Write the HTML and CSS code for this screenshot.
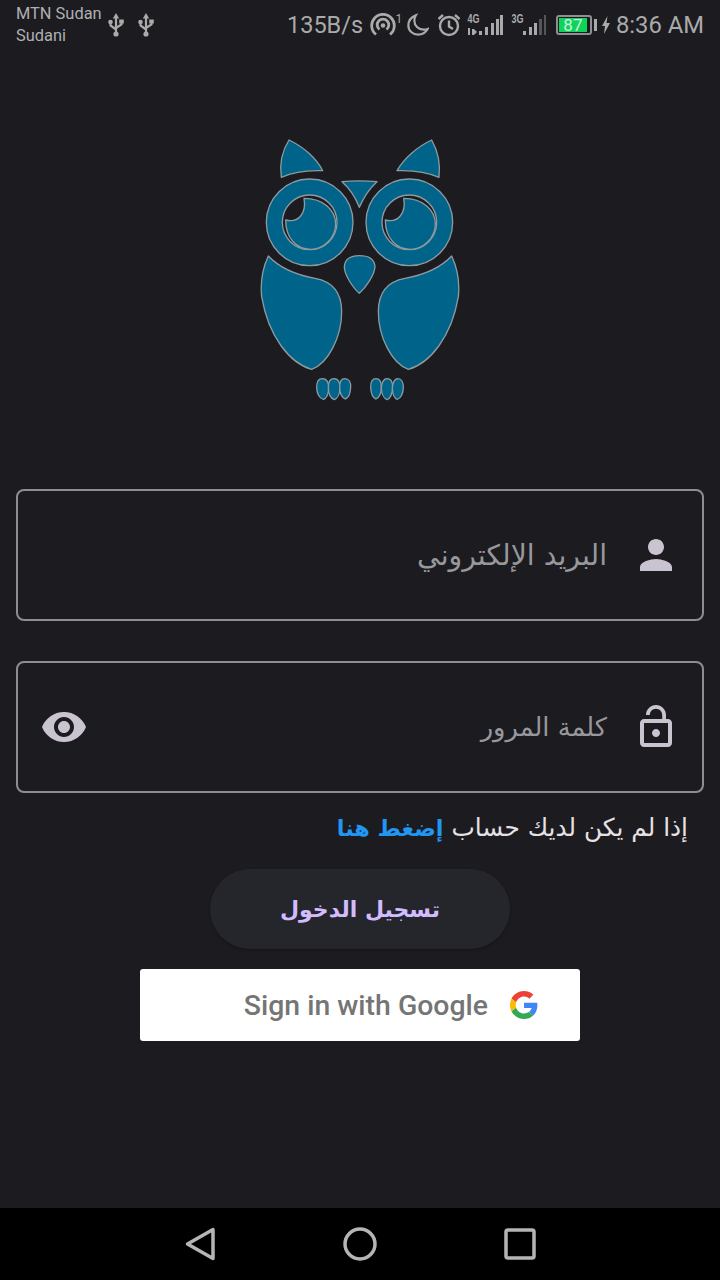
FILE: index.html
```html
<!DOCTYPE html>
<html lang="ar">
<head>
<meta charset="utf-8">
<title>Login</title>
<link rel="stylesheet" href="styles.css">
</head>
<body>
<div class="screen">
  <header class="status" dir="ltr">
    <div class="carrier"><span>MTN Sudan</span><span>Sudani</span></div>
    <svg class="usb" viewBox="0 0 16 24"><path d="M8 0l3.200 5.500H4.800z" fill="#aaa"/><path d="M8 4V20M2.500 10v2.500L8 16.500M13.500 9v2.500L8 15" fill="none" stroke="#aaa" stroke-width="2.200"/><circle cx="2.500" cy="9" r="2.300" fill="#aaa"/><rect x="11.200" y="6.500" width="4.600" height="4" fill="#aaa"/><circle cx="8" cy="21" r="2.600" fill="#aaa"/></svg>
    <svg class="usb" viewBox="0 0 16 24"><path d="M8 0l3.200 5.500H4.800z" fill="#aaa"/><path d="M8 4V20M2.500 10v2.500L8 16.500M13.500 9v2.500L8 15" fill="none" stroke="#aaa" stroke-width="2.200"/><circle cx="2.500" cy="9" r="2.300" fill="#aaa"/><rect x="11.200" y="6.500" width="4.600" height="4" fill="#aaa"/><circle cx="8" cy="21" r="2.600" fill="#aaa"/></svg>
    <span class="speed">135B/s</span>
    <svg class="hotspot" viewBox="0 0 32 24"><g fill="none" stroke="#aaa" stroke-width="2.800"><path d="M6 21.500A11.300 11.300 0 1 1 20 21.500"/><path d="M9.500 16.500a5.800 5.800 0 1 1 7 0"/></g><circle cx="13" cy="12.500" r="2.300" fill="#aaa"/><text x="25.500" y="10" class="tiny-one">1</text></svg>
    <svg class="moon" viewBox="0 0 24 24"><path d="M9.500 1.500C4.600 3.500 1.500 7.600 1.500 12.500c0 5.800 4.700 10 10.500 10 4.500 0 8.300-2.300 10.500-6.200-1 .4-2.500.7-4 .7C12.300 17 8 12.600 8 7c0-2 .5-3.800 1.500-5.500z" fill="none" stroke="#aaa" stroke-width="2.400"/></svg>
    <svg class="alarm" viewBox="0 0 24 24"><g fill="none" stroke="#aaa" stroke-width="2.400"><circle cx="12" cy="13" r="9"/><path d="M12 7.500V13.500l4 2.500M1.500 6l4.500-4M22.500 6L18 2"/></g></svg>
    <svg class="sig4" viewBox="0 0 37 24"><text x="0.500" y="10" class="net" textLength="12" lengthAdjust="spacingAndGlyphs">4G</text><path d="M1 15h2v7H1zM5 16h2l3 3-3 3H5zM12 18h3v4h-3zM18 14h3v8h-3zM24 10h3v12h-3zM29 6h3v16h-3zM33 2h3v20h-3z" fill="#aaa"/></svg>
    <svg class="sig3" viewBox="0 0 35 24"><text x="0.500" y="10" class="net" textLength="12" lengthAdjust="spacingAndGlyphs">3G</text><path d="M12 18h3v4h-3zM18 14h3v8h-3z" fill="#aaa"/><path d="M23 10h3v12h-3z" fill="#aaa"/><path d="M28 6h3v16h-3zM33 2h3v20h-3z" fill="#55555a"/></svg>
    <div class="battery"><div class="battery-body"><span class="battery-level">87</span></div><i class="battery-nib"></i></div>
    <svg class="bolt" viewBox="0 0 8 18"><path d="M5.500 0L0 10h3l-1 8 6-11H4.500z" fill="#aaa"/></svg>
    <span class="time">8:36 AM</span>
  </header>

  <main class="content" dir="rtl">
    <div class="logo-wrap">
      <svg class="owl" viewBox="0 0 720 840">
        <g fill="#00648a" stroke="#8d9aa0" stroke-width="4" stroke-linejoin="round">
          <path d="M147 30C190 50 230 85 248 122C200 120 155 128 124 142C118 100 128 60 147 30Z"/>
          <path d="M575 30C532 50 492 85 471 122C520 120 565 128 597 142C602 100 592 60 575 30Z"/>
          <path d="M306 155Q358 150 411 155Q378 185 358 232Q340 185 306 155Z"/>
          <path fill-rule="evenodd" d="M79 277a130 130 0 1 0 260 0a130 130 0 1 0-260 0ZM127 277a82 82 0 1 1 164 0a82 82 0 1 1-164 0Z"/>
          <path fill-rule="evenodd" d="M378 277a130 130 0 1 0 260 0a130 130 0 1 0-260 0ZM426 277a82 82 0 1 1 164 0a82 82 0 1 1-164 0Z"/>
          <path d="M192 205C250 205 287 240 287 282C287 325 250 358 212 358C170 358 137 325 137 270C175 280 200 250 192 205Z"/>
          <path d="M491 205C549 205 586 240 586 282C586 325 549 358 511 358C469 358 436 325 436 270C474 280 499 250 491 205Z"/>
          <path d="M358 377C380 377 402 385 405 408C405 435 375 475 358 490C340 475 313 435 313 410C315 385 335 377 358 377Z"/>
          <path d="M85 378C120 415 170 435 225 445C280 455 305 490 305 545C305 620 265 700 215 718C150 700 85 620 65 500C60 450 70 410 85 378Z"/>
          <path d="M635 378C600 415 550 435 495 445C440 455 415 490 415 545C415 620 455 700 505 718C570 700 635 620 655 500C660 450 650 410 635 378Z"/>
          <path d="M247 746C262 746 267 760 266 776C265 792 259 805 250 808C238 805 230 790 230 772C230 757 236 746 247 746Z"/>
          <path d="M282 746C296 746 301 760 300 776C299 792 292 806 283 809C272 805 265 790 265 772C265 757 271 746 282 746Z"/>
          <path d="M314 746C327 746 333 756 332 772C331 790 325 804 316 807C306 803 299 790 299 772C299 757 304 746 314 746Z"/>
          <path d="M408 746C419 746 424 757 424 772C424 790 417 803 408 807C399 804 393 790 392 772C392 756 398 746 408 746Z"/>
          <path d="M441 746C452 746 458 757 458 772C458 790 451 806 441 809C432 806 425 792 424 776C424 760 430 746 441 746Z"/>
          <path d="M474 746C484 746 490 757 490 772C490 790 482 805 472 808C464 805 458 792 457 776C457 760 463 746 474 746Z"/>
        </g>
      </svg>
    </div>

    <div class="field">
      <svg class="field-icon" viewBox="0 0 24 24"><path d="M12 12c2.210 0 4-1.790 4-4s-1.790-4-4-4-4 1.790-4 4 1.790 4 4 4zm0 2c-2.670 0-8 1.340-8 4v2h16v-2c0-2.660-5.330-4-8-4z"/></svg>
      <span class="field-label field-label-email">البريد الإلكتروني</span>
    </div>

    <div class="field field-password">
      <svg class="field-icon" viewBox="0 0 24 24"><path d="M12 17c1.100 0 2-.9 2-2s-.9-2-2-2-2 .9-2 2 .9 2 2 2zm6-9h-1V6c0-2.760-2.240-5-5-5S7 3.240 7 6h1.900c0-1.710 1.390-3.100 3.100-3.100 1.710 0 3.100 1.390 3.100 3.100v2H6c-1.100 0-2 .9-2 2v10c0 1.100.9 2 2 2h12c1.100 0 2-.9 2-2V10c0-1.100-.9-2-2-2zm0 12H6V10h12v10z"/></svg>
      <span class="field-label">كلمة المرور</span>
      <svg class="field-icon eye" viewBox="0 0 24 24"><path d="M12 4.500C7 4.500 2.730 7.610 1 12c1.730 4.390 6 7.500 11 7.500s9.270-3.110 11-7.500c-1.730-4.390-6-7.500-11-7.500zM12 17c-2.760 0-5-2.240-5-5s2.240-5 5-5 5 2.240 5 5-2.240 5-5 5zm0-8c-1.660 0-3 1.340-3 3s1.340 3 3 3 3-1.340 3-3-1.340-3-3-3z"/></svg>
    </div>

    <p class="signup">إذا لم يكن لديك حساب <b class="signup-link">إضغط هنا</b></p>

    <button class="login">تسجيل الدخول</button>

    <button class="google" dir="ltr">
      <span class="google-text">Sign in with Google</span>
      <svg class="google-logo" viewBox="0 0 48 48">
        <path fill="#EA4335" d="M24 9.500c3.540 0 6.710 1.220 9.210 3.600l6.850-6.850C35.900 2.380 30.470 0 24 0 14.620 0 6.510 5.380 2.560 13.220l7.980 6.190C12.430 13.720 17.740 9.500 24 9.500z"/>
        <path fill="#4285F4" d="M46.980 24.550c0-1.570-.15-3.090-.38-4.550H24v9.020h12.940c-.58 2.960-2.260 5.480-4.780 7.180l7.730 6c4.510-4.180 7.090-10.360 7.090-17.650z"/>
        <path fill="#FBBC05" d="M10.530 28.590c-.48-1.450-.76-2.990-.76-4.590s.27-3.140.76-4.590l-7.980-6.190C.92 16.460 0 20.120 0 24c0 3.880.92 7.540 2.560 10.780l7.970-6.190z"/>
        <path fill="#34A853" d="M24 48c6.480 0 11.930-2.130 15.890-5.810l-7.730-6c-2.150 1.450-4.920 2.300-8.160 2.300-6.260 0-11.570-4.220-13.470-9.910l-7.980 6.190C6.510 42.620 14.620 48 24 48z"/>
      </svg>
    </button>
  </main>

  <nav class="navbar" dir="ltr">
    <svg class="nav-icon" viewBox="0 0 40 40"><path d="M7.500 20L33 5.500v29z" /></svg>
    <svg class="nav-icon" viewBox="0 0 40 40"><circle cx="20" cy="20" r="15"/></svg>
    <svg class="nav-icon" viewBox="0 0 40 40"><rect x="6" y="6" width="28" height="28" rx="2"/></svg>
  </nav>
</div>
</body>
</html>
```

FILE: styles.css
```css
* { box-sizing: border-box; }
html, body { margin: 0; padding: 0; }
body { background: #1b1b20; font-family: Roboto, "DejaVu Sans", sans-serif; }

.screen { width: 720px; height: 1280px; display: flex; flex-direction: column; overflow: hidden; }

/* status bar */
.status { height: 48px; flex: none; display: flex; align-items: center; padding: 2px 16px 0; color: #aaa; }
.carrier { display: flex; flex-direction: column; width: 92px; font-size: 16.400px; line-height: 22px; color: #b0b0b0; white-space: nowrap; }
.usb { width: 16px; height: 24px; margin-right: 14px; }
.speed { font-size: 23.500px; margin-left: 119px; width: 83px; white-space: nowrap; }
.hotspot { width: 32px; height: 24px; margin-right: 5px; }
.tiny-one { font: 12px Roboto, sans-serif; fill: #aaa; }
.moon { width: 22px; height: 24px; margin-right: 8px; }
.alarm { width: 24px; height: 24px; margin-right: 6px; }
.sig4 { width: 37px; height: 24px; margin-right: 7px; }
.sig3 { width: 35px; height: 24px; margin-right: 10px; }
.net { font: 700 12px "Liberation Sans", sans-serif; fill: #aaa; }
.battery { display: flex; align-items: center; gap: 2px; width: 41px; }
.battery-body { width: 36px; height: 20px; border: 2px solid #8f8f8f; border-radius: 3px; padding: 1px 3px 1px 1px; display: flex; }
.battery-level { flex: 1; background: #0fd45c; color: #cfeedd; font-size: 17px; line-height: 14px; text-align: center; }
.battery-nib { width: 3px; height: 12px; background: #aaa; }
.bolt { width: 8px; height: 18px; margin: 0 6px 0 5px; }
.time { font-size: 23.800px; white-space: nowrap; }

/* main */
.content { flex: 1; padding: 0 16px; display: flex; flex-direction: column; align-items: center; }
.logo-wrap { padding-top: 82px; height: 441px; flex: none; }
.owl { display: block; width: 240px; height: 280px; filter: blur(0.4px); }

.field { width: 100%; height: 132px; flex: none; border: 2px solid #8e8e92; border-radius: 8px; padding: 0 22px; display: flex; align-items: center; gap: 25px; }
.field-password { margin-top: 40px; }
.field-icon { width: 48px; height: 48px; fill: #cac4d0; flex: none; }
.field-label { font-family: "DejaVu Sans", sans-serif; font-size: 25.700px; color: #98989c; white-space: nowrap; }
.field-label-email { font-size: 28.300px; }
.eye { margin-right: auto; }

.signup { align-self: stretch; margin: 18px 0 0; padding-right: 16px; height: 40px; font-family: "DejaVu Sans", sans-serif; font-size: 24.800px; line-height: 34px; color: #e6e1e5; white-space: nowrap; }
.signup-link { color: #2196f3; font-weight: 700; font-size: 22.400px; }

.login { width: 300px; height: 80px; flex: none; margin-top: 18px; border: 0; border-radius: 40px; background: #25252c; color: #d0bcff; font-family: "DejaVu Sans", sans-serif; font-size: 22px; font-weight: 700; box-shadow: 0 1px 3px rgba(0,0,0,.25); }

.google { width: 440px; height: 72px; flex: none; margin-top: 20px; border: 0; border-radius: 3px; background: #fff; display: flex; align-items: center; justify-content: flex-end; gap: 22px; padding: 0 42px 0 0; }
.google-text { font-family: Roboto, sans-serif; font-size: 28.400px; font-weight: 500; color: #757575; white-space: nowrap; }
.google-logo { width: 28px; height: 28px; flex: none; }

/* nav */
.navbar { height: 72px; flex: none; background: #000; display: flex; align-items: center; justify-content: center; gap: 120px; }
.nav-icon { width: 40px; height: 40px; fill: none; stroke: #b5b5b5; stroke-width: 3.500px; stroke-linejoin: round; }
```
